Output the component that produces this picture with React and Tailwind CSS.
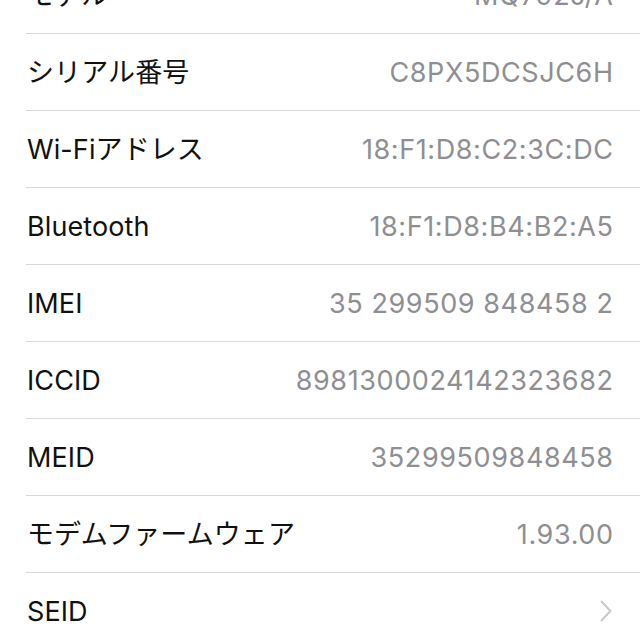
import React from 'react';

const rows = [
    { label: 'モデル', value: 'MQ792J/A' },
    { label: 'シリアル番号', value: 'C8PX5DCSJC6H' },
    { label: 'Wi-Fiアドレス', value: '18:F1:D8:C2:3C:DC' },
    { label: 'Bluetooth', value: '18:F1:D8:B4:B2:A5' },
    { label: 'IMEI', value: '35 299509 848458 2' },
    { label: 'ICCID', value: '8981300024142323682' },
    { label: 'MEID', value: '35299509848458' },
    { label: 'モデムファームウェア', value: '1.93.00' },
    { label: 'SEID', chevron: true },
];

const Chevron = () => (
    <svg width="12" height="22" viewBox="0 0 12 22" fill="none" className="mr-[1px]">
        <path d="M1.5 1.5 L10.5 11 L1.5 20.5" stroke="#c7c7cc" strokeWidth="2" strokeLinecap="round" strokeLinejoin="round" />
    </svg>
);

const App = () => {
    return (
        <div
            className="w-[640px] h-[640px] overflow-hidden bg-white"
            style={{ fontFamily: 'Inter, "Noto Sans CJK JP", sans-serif' }}
        >
            <div className="-mt-[43px] pl-[26px]">
                {rows.map((row) => (
                    <div key={row.label} className="h-[77px] flex items-center justify-between pr-[27px] border-b border-[#d9d9dc]">
                        <span className="pl-[1px] pt-[3px] text-[27px] text-[#111] tracking-[0.1px]">{row.label}</span>
                        {row.chevron ? (
                            <Chevron />
                        ) : (
                            <span className="pt-[3px] text-[27px] text-[#8e8e93] tracking-[0.6px] -mr-[0.6px]">{row.value}</span>
                        )}
                    </div>
                ))}
            </div>
        </div>
    );
};

export default App;
